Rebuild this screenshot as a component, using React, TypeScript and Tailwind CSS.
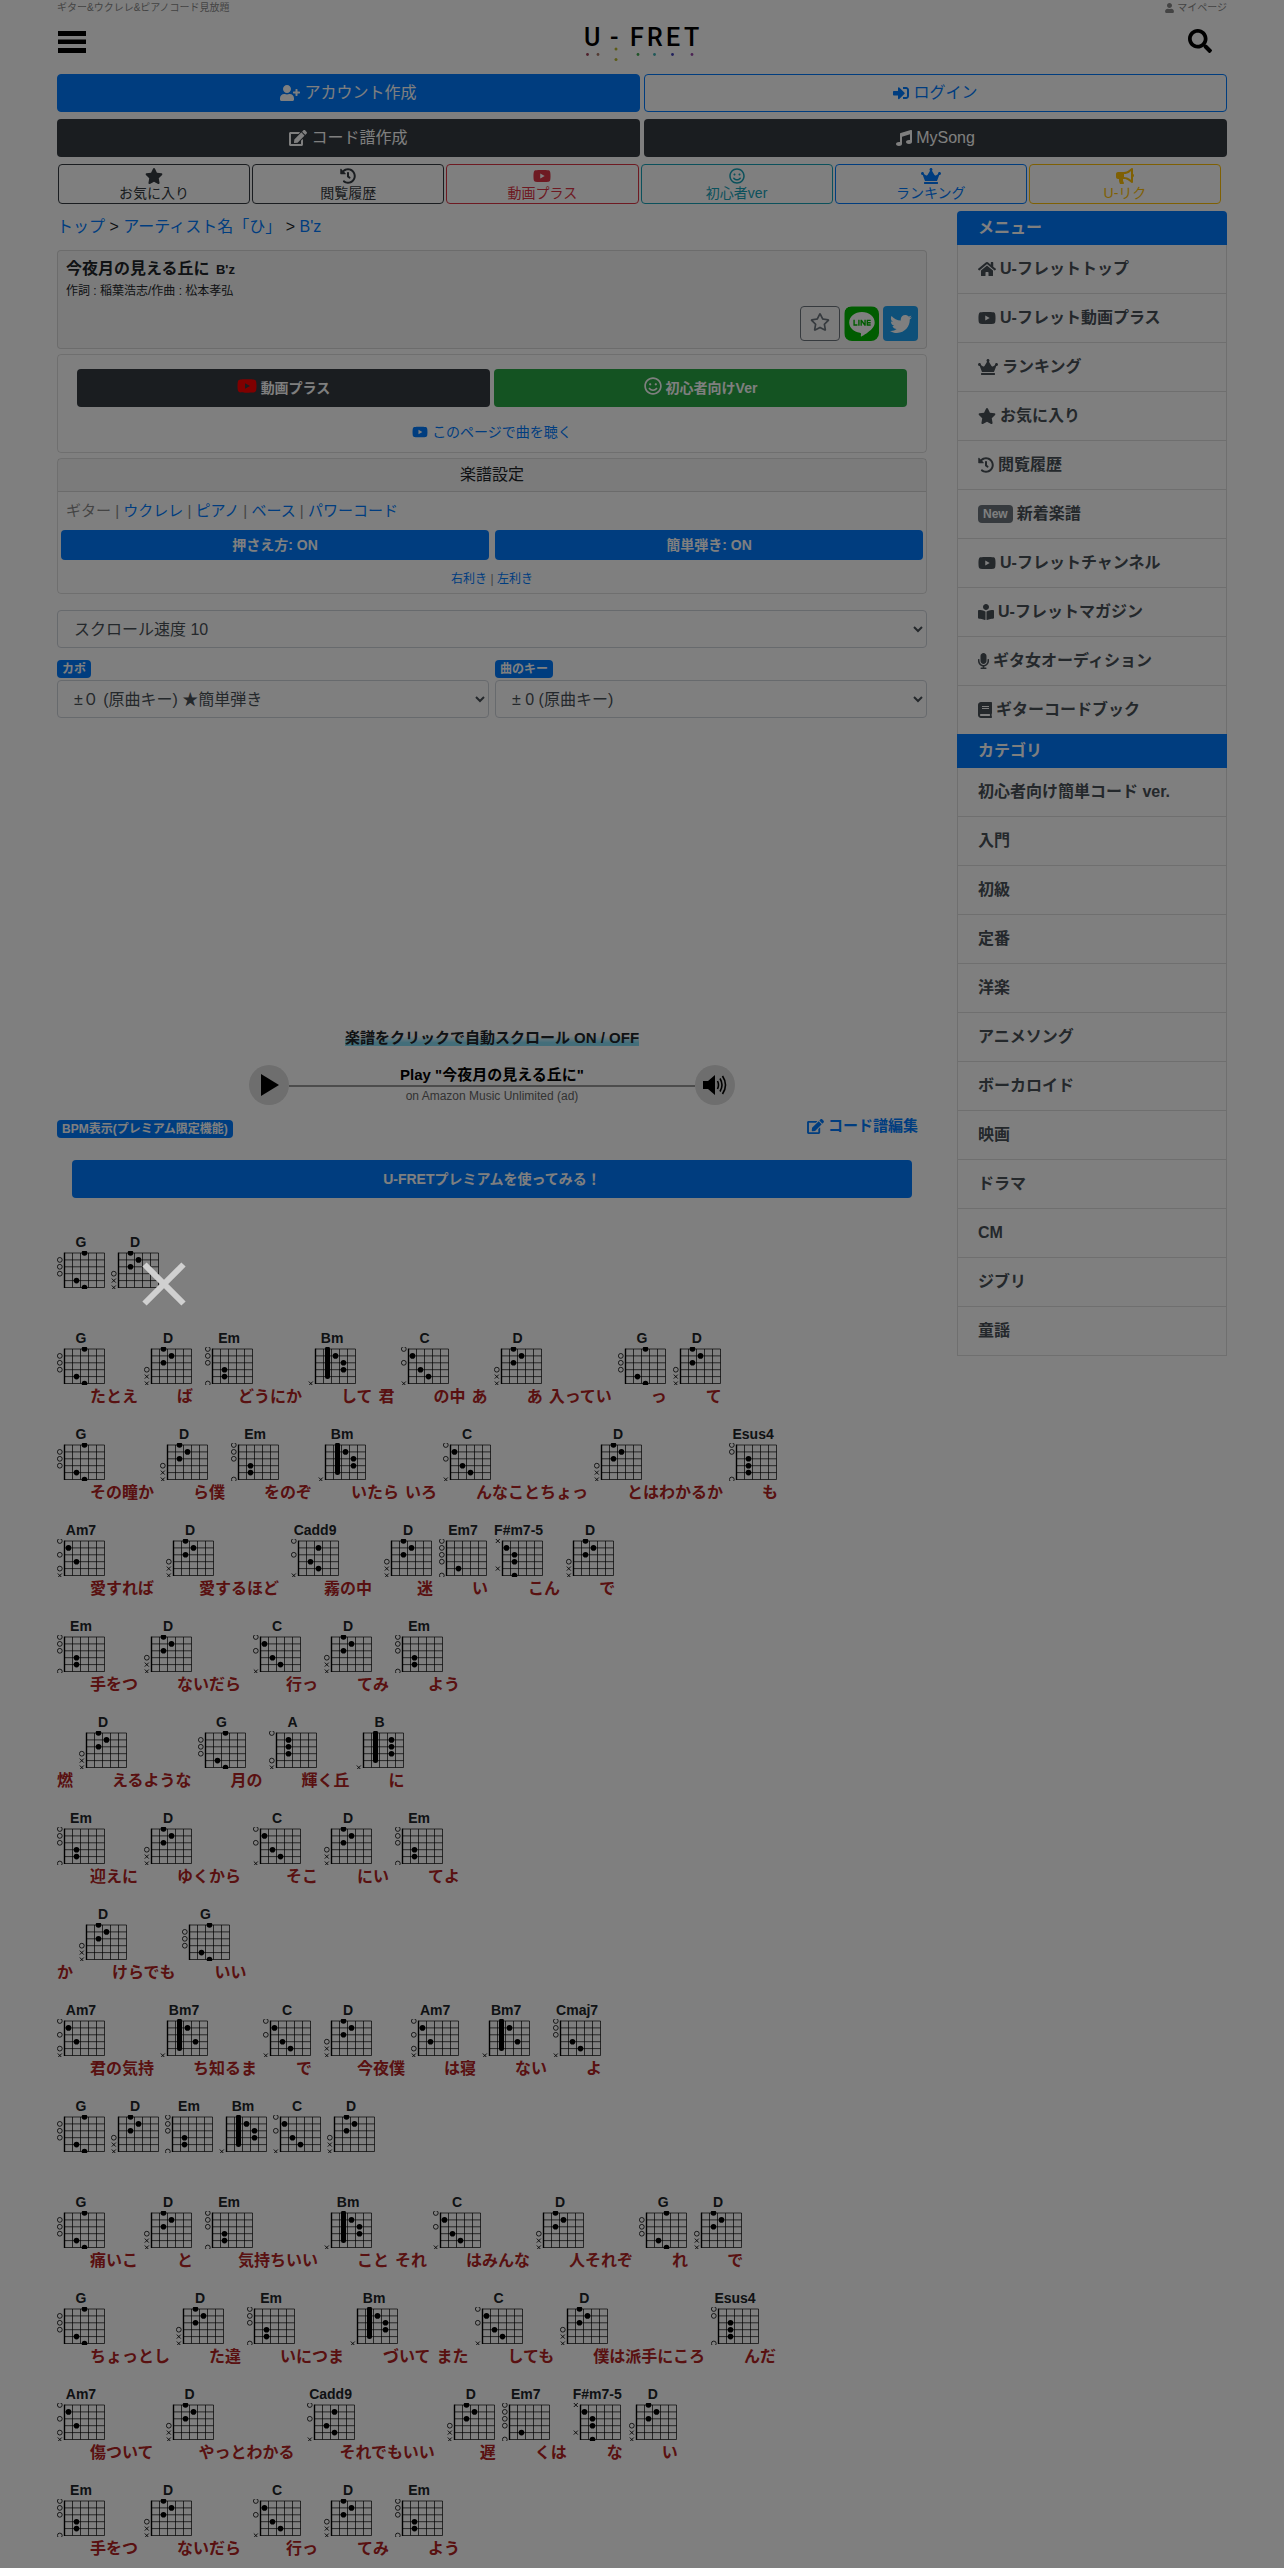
import type { ReactNode } from 'react';
import {
  FaBook,
  FaBookReader,
  FaBullhorn,
  FaCrown,
  FaEdit,
  FaHistory,
  FaHome,
  FaLine,
  FaMicrophone,
  FaMusic,
  FaRegSmile,
  FaRegStar,
  FaSearch,
  FaSignInAlt,
  FaStar,
  FaTwitter,
  FaUser,
  FaUserPlus,
  FaYoutube,
} from 'react-icons/fa';

type Shape = {
  dots: [number, number][]; // [string, fret]
  open?: number[];
  mute?: number[];
  bar?: number; // fret of the barre, strings 1-5
};

const shapes: Record<string, Shape> = {
  G: { dots: [[1, 3], [5, 2], [6, 3]], open: [2, 3, 4] },
  D: { dots: [[1, 2], [2, 3], [3, 2]], open: [4], mute: [5, 6] },
  Em: { dots: [[4, 2], [5, 2]], open: [1, 2, 3, 6] },
  Bm: { dots: [[2, 3], [3, 4], [4, 4]], mute: [6], bar: 2 },
  C: { dots: [[2, 1], [4, 2], [5, 3]], open: [1, 3], mute: [6] },
  Esus4: { dots: [[3, 2], [4, 2], [5, 2]], open: [1, 2, 6] },
  Am7: { dots: [[2, 1], [4, 2]], open: [1, 3, 5], mute: [6] },
  Cadd9: { dots: [[2, 3], [4, 2], [5, 3]], open: [1, 3], mute: [6] },
  Em7: { dots: [[5, 2]], open: [1, 2, 3, 4, 6] },
  'F#m7-5': { dots: [[2, 1], [3, 2], [4, 2], [6, 2]], mute: [1, 5] },
  A: { dots: [[2, 2], [3, 2], [4, 2]], open: [1, 5], mute: [6] },
  B: { dots: [[2, 4], [3, 4], [4, 4]], mute: [6], bar: 2 },
  Bm7: { dots: [[2, 3], [4, 4]], mute: [6], bar: 2 },
  Cmaj7: { dots: [[4, 2], [5, 3]], open: [1, 2, 3], mute: [6] },
};

// each entry is [chord, lyric]; a trailing space in the lyric leaves a gap
const song: [string, string][][] = [
  [['G', ''], ['D', '']],
  [['G', 'たとえ'], ['D', 'ば '], ['Em', 'どうにか'], ['Bm', 'して 君'], ['C', 'の中 あ'], ['D', 'あ 入ってい'], ['G', 'っ'], ['D', 'て']],
  [['G', 'その瞳か'], ['D', 'ら僕'], ['Em', 'をのぞ'], ['Bm', 'いたら いろ'], ['C', 'んなことちょっ'], ['D', 'とはわかるか'], ['Esus4', 'も']],
  [['Am7', '愛すれば '], ['D', '愛するほど '], ['Cadd9', '霧の中 '], ['D', '迷'], ['Em7', 'い'], ['F#m7-5', 'こん'], ['D', 'で']],
  [['Em', '手をつ'], ['D', 'ないだら '], ['C', '行っ'], ['D', 'てみ'], ['Em', 'よう']],
  [['', '燃'], ['D', 'えるような'], ['G', '月の'], ['A', '輝く丘'], ['B', 'に']],
  [['Em', '迎えに'], ['D', 'ゆくから '], ['C', 'そこ'], ['D', 'にい'], ['Em', 'てよ']],
  [['', 'か'], ['D', 'けらでも'], ['G', 'いい']],
  [['Am7', '君の気持'], ['Bm7', 'ち知るま'], ['C', 'で '], ['D', '今夜僕'], ['Am7', 'は寝'], ['Bm7', 'ない'], ['Cmaj7', 'よ']],
  [['G', ''], ['D', ''], ['Em', ''], ['Bm', ''], ['C', ''], ['D', '']],
  [['G', '痛いこ'], ['D', 'と '], ['Em', '気持ちいい'], ['Bm', 'こと それ'], ['C', 'はみんな'], ['D', '人それぞ'], ['G', 'れ'], ['D', 'で']],
  [['G', 'ちょっとし'], ['D', 'た違'], ['Em', 'いにつま'], ['Bm', 'づいて また'], ['C', 'しても'], ['D', '僕は派手にころ'], ['Esus4', 'んだ']],
  [['Am7', '傷ついて '], ['D', 'やっとわかる '], ['Cadd9', 'それでもいい '], ['D', '遅'], ['Em7', 'くは'], ['F#m7-5', 'な'], ['D', 'い']],
  [['Em', '手をつ'], ['D', 'ないだら '], ['C', '行っ'], ['D', 'てみ'], ['Em', 'よう']],
];

const menu: { label: string; icon: ReactNode }[] = [
  { label: 'U-フレットトップ', icon: <FaHome className="h-4 w-[18px]" /> },
  { label: 'U-フレット動画プラス', icon: <FaYoutube className="h-4 w-[18px]" /> },
  { label: 'ランキング', icon: <FaCrown className="h-4 w-5" /> },
  { label: 'お気に入り', icon: <FaStar className="h-4 w-[18px]" /> },
  { label: '閲覧履歴', icon: <FaHistory className="h-4 w-4" /> },
  {
    label: '新着楽譜',
    icon: <span className="rounded bg-[#6c757d] px-[5px] text-xs leading-[18px] text-white">New</span>,
  },
  { label: 'U-フレットチャンネル', icon: <FaYoutube className="h-4 w-[18px]" /> },
  { label: 'U-フレットマガジン', icon: <FaBookReader className="h-4 w-4" /> },
  { label: 'ギタ女オーディション', icon: <FaMicrophone className="h-4 w-[11px]" /> },
  { label: 'ギターコードブック', icon: <FaBook className="h-4 w-[14px]" /> },
];

const categories = [
  '初心者向け簡単コード ver.', '入門', '初級', '定番', '洋楽', 'アニメソング',
  'ボーカロイド', '映画', 'ドラマ', 'CM', 'ジブリ', '童謡',
];

const quickLinks = [
  { label: 'お気に入り', icon: <FaStar className="h-4 w-[18px]" />, color: 'border-[#343a40] text-[#343a40]' },
  { label: '閲覧履歴', icon: <FaHistory className="h-4 w-4" />, color: 'border-[#343a40] text-[#343a40]' },
  { label: '動画プラス', icon: <FaYoutube className="h-4 w-[18px]" />, color: 'border-[#dc3545] text-[#dc3545]' },
  { label: '初心者ver', icon: <FaRegSmile className="h-4 w-4" />, color: 'border-[#17a2b8] text-[#17a2b8]' },
  { label: 'ランキング', icon: <FaCrown className="h-4 w-5" />, color: 'border-[#007bff] text-[#007bff]' },
  { label: 'U-リク', icon: <FaBullhorn className="h-4 w-[18px]" />, color: 'border-[#ffc107] text-[#ffc107]' },
];

function ChordDiagram({ name }: { name: string }) {
  const shape = shapes[name];
  const sy = (s: number) => 2 + (s - 1) * 6.9;
  const fx = (f: number) => 7.5 + (f - 0.5) * 8;
  return (
    <svg width="48" height="38" viewBox="0 0 48 38" aria-hidden="true" fill="none" stroke="#000">
      {[1, 2, 3, 4, 5, 6].map((n) => (
        <path key={n} strokeWidth="0.7" d={`M7.5 ${sy(n)}H47.5M${7.5 + (n - 1) * 8} 2V36.5`} />
      ))}
      <path strokeWidth="1.4" d="M7.5 1.6V37" />
      {shape.bar && (
        <path strokeWidth="5" strokeLinecap="round" d={`M${fx(shape.bar)} ${sy(1)}V${sy(5)}`} />
      )}
      {shape.dots.map(([s, f]) => (
        <circle key={`${s}-${f}`} cx={fx(f)} cy={sy(s)} r="2.8" fill="#000" stroke="none" />
      ))}
      {shape.open?.map((s) => (
        <circle key={s} cx="2.8" cy={sy(s)} r="2.4" strokeWidth="0.8" />
      ))}
      {shape.mute?.map((s) => (
        <path key={s} strokeWidth="0.9" d={`M0.8 ${sy(s) - 2}l4 4m0 -4l-4 4`} />
      ))}
    </svg>
  );
}

function Logo() {
  return (
    <svg width="118" height="42" viewBox="0 0 118 42" aria-label="U-FRET">
      <text
        x="1 27 47 64 83 101"
        y="26"
        className="font-['Roboto'] text-[25px] font-medium"
        fill="#000"
      >
        U-FRET
      </text>
      <circle cx="4.5" cy="34.5" r="1.4" fill="#a04058" />
      <circle cx="15" cy="34.5" r="1.4" fill="#a87868" />
      <circle cx="33" cy="29" r="1.5" fill="#b8b830" />
      <circle cx="33" cy="39.5" r="1.5" fill="#b8b830" />
      <circle cx="55" cy="34.5" r="1.4" fill="#40a850" />
      <circle cx="71.5" cy="34.5" r="1.4" fill="#40b0b0" />
      <circle cx="89.5" cy="34.5" r="1.4" fill="#4040b8" />
      <circle cx="109" cy="34.5" r="1.4" fill="#9848a8" />
    </svg>
  );
}

function Header() {
  return (
    <header>
      <div className="flex justify-between text-[10px] leading-4 text-[#888]">
        <p>ギター&amp;ウクレレ&amp;ピアノコード見放題</p>
        <a href="#mypage" className="flex items-center gap-[3px]">
          <FaUser className="h-[10px] w-[9px]" />
          マイページ
        </a>
      </div>
      <div className="grid h-[58px] grid-cols-[1fr_auto_1fr] items-start">
        <button type="button" aria-label="メニュー" className="mt-[14px] ml-px justify-self-start">
          <svg width="28" height="24" viewBox="0 0 28 24" fill="#000">
            <path d="M0 1h28v5H0zM0 9.500h28v4.500H0zM0 18h28v5H0z" />
          </svg>
        </button>
        <a href="#top" className="mt-1">
          <Logo />
        </a>
        <button type="button" aria-label="検索" className="mt-[13px] mr-[15px] justify-self-end text-black">
          <FaSearch className="h-6 w-6" />
        </button>
      </div>
      <div className="grid grid-cols-2 gap-x-1 gap-y-[7px] leading-6">
        <a href="#signup" className="flex items-center justify-center gap-1 rounded border border-[#007bff] bg-[#007bff] py-1.5 text-white">
          <FaUserPlus className="h-4 w-5" />
          アカウント作成
        </a>
        <a href="#login" className="flex items-center justify-center gap-1 rounded border border-[#007bff] py-1.5 text-[#007bff]">
          <FaSignInAlt className="h-4 w-4" />
          ログイン
        </a>
        <a href="#create" className="flex items-center justify-center gap-1 rounded bg-[#343a40] py-[7px] text-white">
          <FaEdit className="h-4 w-[18px]" />
          コード譜作成
        </a>
        <a href="#mysong" className="flex items-center justify-center gap-1 rounded bg-[#343a40] py-[7px] text-white">
          <FaMusic className="h-4 w-4" />
          MySong
        </a>
      </div>
      <nav className="mt-[7px] mr-[5px] grid grid-cols-6 gap-0.5 px-px text-sm leading-4">
        {quickLinks.map((q) => (
          <a key={q.label} href="#quick" className={`flex flex-col items-center gap-px rounded-sm border pt-[3px] pb-0.5 ${q.color}`}>
            {q.icon}
            {q.label}
          </a>
        ))}
      </nav>
    </header>
  );
}

function SongCard() {
  return (
    <section className="mt-[11px] rounded border border-black/13 bg-black/3 px-2 pt-1.5 pb-[7px]">
      <h1 className="font-bold leading-6">
        今夜月の見える丘に <span className="ml-0.5 text-[13px]">B'z</span>
      </h1>
      <p className="text-xs leading-[18px]">作詞 : 稲葉浩志/作曲 : 松本孝弘</p>
      <div className="mt-[6px] flex justify-end gap-1">
        <button type="button" aria-label="お気に入りに追加" className="flex h-[35px] w-10 items-center justify-center rounded border border-[#6c757d] text-[#6c757d]">
          <FaRegStar className="mb-1 h-[18px] w-5" />
        </button>
        <a href="#line" aria-label="LINE" className="flex h-[35px] w-[35px] items-center justify-center overflow-hidden rounded-lg bg-white text-[#00b900]">
          <FaLine className="h-10 w-10 shrink-0" />
        </a>
        <a href="#twitter" aria-label="Twitter" className="flex h-[35px] w-[35px] items-center justify-center rounded bg-[#1da1f2] text-white">
          <FaTwitter className="h-[22px] w-[22px]" />
        </a>
      </div>
    </section>
  );
}

function Settings() {
  return (
    <>
      <section className="mt-[5px] rounded border border-black/13 px-[19px] pt-[14px] pb-[9px] text-sm">
        <div className="grid grid-cols-2 gap-1 font-bold text-white">
          <a href="#movie" className="flex h-[38px] items-center justify-center gap-1 rounded bg-[#343a40]">
            <FaYoutube className="mb-1 h-[18px] w-5 text-[#f00]" />
            動画プラス
          </a>
          <a href="#easy" className="flex h-[38px] items-center justify-center gap-1 rounded bg-[#28a745]">
            <FaRegSmile className="mb-1 h-[18px] w-[18px]" />
            初心者向けVer
          </a>
        </div>
        <a href="#listen" className="mt-[14px] flex items-center justify-center gap-1 leading-[22px] text-[#007bff]">
          <FaYoutube className="h-[14px] w-4" />
          このページで曲を聴く
        </a>
      </section>

      <section className="mt-[5px] rounded border border-black/13 text-sm">
        <h2 className="border-b border-black/13 bg-black/3 py-1 text-center text-base leading-6">楽譜設定</h2>
        <p className="px-2 pt-2 text-[15px] leading-[21px] text-[#888]">
          ギター | <a href="#ukulele" className="text-[#007bff]">ウクレレ</a> |{' '}
          <a href="#piano" className="text-[#007bff]">ピアノ</a> |{' '}
          <a href="#bass" className="text-[#007bff]">ベース</a> |{' '}
          <a href="#power" className="text-[#007bff]">パワーコード</a>
        </p>
        <div className="mt-[9px] grid grid-cols-2 gap-1.5 px-[3px] font-bold text-white">
          <button type="button" className="h-[30px] rounded-sm bg-[#007bff]">押さえ方: ON</button>
          <button type="button" className="h-[30px] rounded-sm bg-[#007bff]">簡単弾き: ON</button>
        </div>
        <p className="pt-[10px] pb-[5px] text-center text-xs leading-[18px] text-[#888]">
          <a href="#right" className="text-[#007bff]">右利き</a> |{' '}
          <a href="#left" className="text-[#007bff]">左利き</a>
        </p>
      </section>

      <select aria-label="スクロール速度" className="mt-4 h-[38px] w-full rounded border border-[#ced4da] bg-white px-3 text-[#495057]">
        <option>スクロール速度 10</option>
      </select>
      <div className="mt-3 grid grid-cols-2 gap-1.5">
        <div>
          <label htmlFor="capo" className="block w-fit rounded bg-[#007bff] px-[5px] text-xs font-bold leading-[18px] text-white">カポ</label>
          <select id="capo" className="mt-0.5 h-[38px] w-full rounded border border-[#ced4da] bg-white px-3 text-[#495057]">
            <option>±０ (原曲キー) ★簡単弾き</option>
          </select>
        </div>
        <div>
          <label htmlFor="key" className="block w-fit rounded bg-[#007bff] px-[5px] text-xs font-bold leading-[18px] text-white">曲のキー</label>
          <select id="key" className="mt-0.5 h-[38px] w-full rounded border border-[#ced4da] bg-white px-3 text-[#495057]">
            <option>± 0 (原曲キー)</option>
          </select>
        </div>
      </div>
    </>
  );
}

function Player() {
  return (
    <section className="mt-[308px]">
      <p className="text-center text-[15px] font-bold leading-6">
        <span className="bg-linear-to-b from-transparent from-40% to-[#87dcf5] to-80%">楽譜をクリックで自動スクロール ON / OFF</span>
      </p>
      <div className="mx-auto mt-[15px] flex w-[486px] items-center text-center">
        <button type="button" aria-label="再生" className="flex h-10 w-10 items-center justify-center rounded-full bg-[#dcdcdc]">
          <svg width="20" height="24" viewBox="0 0 20 24"><path d="M2 1v22L20 12z" /></svg>
        </button>
        <div className="flex-1">
          <p className="text-[15px] font-bold leading-5 text-black">Play "今夜月の見える丘に"</p>
          <hr className="border-t-2 border-[#999]" />
          <p className="text-xs leading-[18px] text-[#666]">on Amazon Music Unlimited (ad)</p>
        </div>
        <button type="button" aria-label="音量" className="flex h-10 w-10 items-center justify-center rounded-full bg-[#dcdcdc]">
          <svg width="26" height="22" viewBox="0 0 26 22" fill="none" stroke="#000" strokeWidth="1.600">
            <path d="M1 7h5l7-6v20l-7-6H1z" fill="#000" stroke="none" />
            <path d="M15.500 7q2 4 0 8M18 4.500q4 6.500 0 13M20.500 2q6 9 0 18" />
          </svg>
        </button>
      </div>
      <div className="mt-[9px] flex items-end justify-between pr-[9px] font-bold">
        <span className="mt-1.5 rounded bg-[#007bff] px-[5px] text-xs leading-[18px] text-white">BPM表示(プレミアム限定機能)</span>
        <a href="#edit" className="flex items-center gap-1 self-start text-[15px] leading-6 text-[#007bff]">
          <FaEdit className="h-[15px] w-[17px]" />
          コード譜編集
        </a>
      </div>
      <a href="#premium" className="mx-[15px] mt-[22px] block rounded bg-[#007bff] text-center text-sm font-bold leading-[38px] text-white">
        U-FRETプレミアムを使ってみる！
      </a>
    </section>
  );
}

function Score() {
  return (
    <section className="mt-[35px] font-bold">
      {song.map((line, i) => (
        <div key={i} className="flex h-24 items-start gap-1.5">
          {line.map(([chord, lyric], j) => (
            <div key={j} className="flex items-start">
              {chord && (
                <div className="flex flex-col items-center">
                  <span className="text-sm leading-[18px]">{chord}</span>
                  <ChordDiagram name={chord} />
                </div>
              )}
              {lyric && (
                <p className={`mt-14 flex gap-1.5 leading-6 whitespace-nowrap text-[#b22222] ${chord ? '-ml-[15px]' : ''}`}>
                  {lyric.split(' ').map((part, k) => (
                    <span key={k}>{part}</span>
                  ))}
                </p>
              )}
            </div>
          ))}
        </div>
      ))}
    </section>
  );
}

function Sidebar() {
  return (
    <aside className="w-[270px] shrink-0 pt-[7px] font-bold leading-6 text-[#495057]">
      <h2 className="rounded-t bg-[#007bff] px-[21px] py-[5px] text-white">メニュー</h2>
      <ul className="border-x border-black/13">
        {menu.map((item) => (
          <li key={item.label} className="border-b border-black/13 last:border-b-0">
            <a href="#menu" className="flex items-center gap-1 px-5 py-3">
              {item.icon}
              {item.label}
            </a>
          </li>
        ))}
      </ul>
      <h2 className="bg-[#007bff] px-[21px] py-[5px] text-white">カテゴリ</h2>
      <ul className="border-x border-black/13">
        {categories.map((name) => (
          <li key={name} className="border-b border-black/13">
            <a href="#category" className="block px-5 py-3">{name}</a>
          </li>
        ))}
      </ul>
    </aside>
  );
}

export default function App() {
  return (
    <div className="bg-white font-['Liberation_Sans','Noto_Sans_CJK_JP',sans-serif] text-base text-[#212529]">
      <div className="mx-auto max-w-[1200px] px-[15px]">
        <Header />
        <div className="flex items-start gap-[30px]">
          <main className="min-w-0 flex-1 pt-[11px]">
            <nav className="leading-6">
              <a href="#top" className="text-[#007bff]">トップ</a> &gt;{' '}
              <a href="#artists" className="text-[#007bff]">アーティスト名「ひ」</a> &gt;{' '}
              <a href="#artist" className="text-[#007bff]">B'z</a>
            </nav>
            <SongCard />
            <Settings />
            <Player />
            <Score />
          </main>
          <Sidebar />
        </div>
      </div>

      {/* Dimmed backdrop */}
      <div className="fixed inset-0 flex items-center bg-black/50 pl-[142px]">
        <button type="button" aria-label="閉じる" className="text-[#d0d0d0]">
          <svg width="44" height="44" viewBox="0 0 44 44" stroke="currentColor" strokeWidth="6">
            <path d="M2.500 2.500l39 39M41.500 2.500l-39 39" />
          </svg>
        </button>
      </div>
    </div>
  );
}
